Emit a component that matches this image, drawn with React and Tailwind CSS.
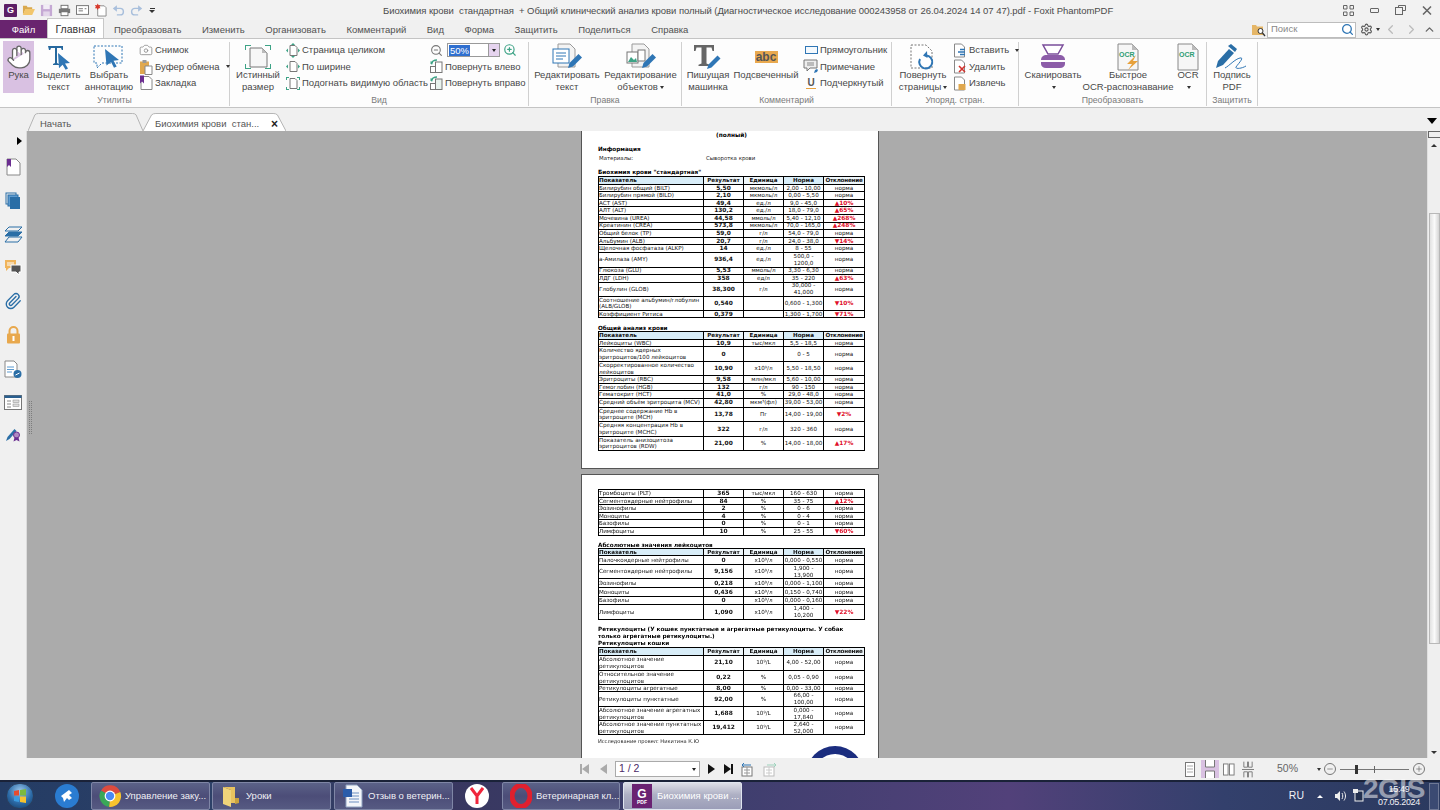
import { Hand, Camera, ZoomIn, ZoomOut, Search, Settings, ChevronLeft, ChevronRight, ChevronUp, Minus, Plus, Paperclip } from "lucide-react";

const S = "h-[7.6px]";
const D = "h-[14.6px]";

const bio = [
  ["Билирубин общий (BILT)", "5,50", "мкмоль/л", "2,00 - 10,00", "норма", S],
  ["Билирубин прямой (BILD)", "2,10", "мкмоль/л", "0,00 - 5,50", "норма", S],
  ["АСТ (AST)", "49,4", "ед./л", "9,0 - 45,0", "▲10%", S],
  ["АЛТ (ALT)", "130,2", "ед./л", "18,0 - 79,0", "▲65%", S],
  ["Мочевина (UREA)", "44,58", "ммоль/л", "5,40 - 12,10", "▲268%", S],
  ["Креатинин (CREA)", "573,8", "мкмоль/л", "70,0 - 165,0", "▲248%", S],
  ["Общий белок (TP)", "59,0", "г/л", "54,0 - 79,0", "норма", S],
  ["Альбумин (ALB)", "20,7", "г/л", "24,0 - 38,0", "▼14%", S],
  ["Щелочная фосфатаза (ALKP)", "14", "ед./л", "8 - 55", "норма", S],
  ["a-Амилаза (AMY)", "936,4", "ед./л", "500,0 - 1200,0", "норма", D],
  ["Глюкоза (GLU)", "5,53", "ммоль/л", "3,30 - 6,30", "норма", S],
  ["ЛДГ (LDH)", "358", "ед/л", "35 - 220", "▲63%", S],
  ["Глобулин (GLOB)", "38,300", "г/л", "30,000 - 41,000", "норма", "h-[13.8px]"],
  ["Соотношение альбумин/глобулин (ALB/GLOB)", "0,540", "", "0,600 - 1,300", "▼10%", D],
  ["Коэффициент Ритиса", "0,379", "", "1,300 - 1,700", "▼71%", "h-[7px]"],
];

const blood = [
  ["Лейкоциты (WBC)", "10,9", "тыс/мкл", "5,5 - 18,5", "норма", S],
  ["Количество ядерных эритроцитов/100 лейкоцитов", "0", "", "0 - 5", "норма", D],
  ["Скорректированное количество лейкоцитов", "10,90", "x10⁹/л", "5,50 - 18,50", "норма", D],
  ["Эритроциты (RBC)", "9,58", "млн/мкл", "5,60 - 10,00", "норма", "h-[7.3px]"],
  ["Гемоглобин (HGB)", "132", "г/л", "90 - 150", "норма", "h-[7.3px]"],
  ["Гематокрит (HCT)", "41,0", "%", "29,0 - 48,0", "норма", "h-[7.6px]"],
  ["Средний объём эритроцита (MCV)", "42,80", "мкм³(фл)", "39,00 - 53,00", "норма", "h-[9px]"],
  ["Среднее содержание Hb в эритроците (MCH)", "13,78", "Пг", "14,00 - 19,00", "▼2%", D],
  ["Средняя концентрация Hb в эритроците (MCHC)", "322", "г/л", "320 - 360", "норма", D],
  ["Показатель анизоцитоза эритроцитов (RDW)", "21,00", "%", "14,00 - 18,00", "▲17%", "h-[14px]"],
];

const blood2 = [
  ["Тромбоциты (PLT)", "365", "тыс/мкл", "160 - 630", "норма", S],
  ["Сегментоядерные нейтрофилы", "84", "%", "35 - 75", "▲12%", S],
  ["Эозинофилы", "2", "%", "0 - 6", "норма", S],
  ["Моноциты", "4", "%", "0 - 4", "норма", S],
  ["Базофилы", "0", "%", "0 - 1", "норма", S],
  ["Лимфоциты", "10", "%", "25 - 55", "▼60%", S],
];

const absolute = [
  ["Палочкоядерные нейтрофилы", "0", "x10⁹/л", "0,000 - 0,550", "норма", "h-[8.7px]"],
  ["Сегментоядерные нейтрофилы", "9,156", "x10⁹/л", "1,900 - 13,900", "норма", D],
  ["Эозинофилы", "0,218", "x10⁹/л", "0,000 - 1,100", "норма", "h-[8.7px]"],
  ["Моноциты", "0,436", "x10⁹/л", "0,150 - 0,740", "норма", "h-[8.7px]"],
  ["Базофилы", "0", "x10⁹/л", "0,000 - 0,160", "норма", "h-[8.3px]"],
  ["Лимфоциты", "1,090", "x10⁹/л", "1,400 - 10,200", "▼22%", D],
];

const retic = [
  ["Абсолютное значение ретикулоцитов", "21,10", "10⁹/L", "4,00 - 52,00", "норма", "h-[15px]"],
  ["Относительное значение ретикулоцитов", "0,22", "%", "0,05 - 0,90", "норма", "h-[14.4px]"],
  ["Ретикулоциты агрегатные", "8,00", "%", "0,00 - 33,00", "норма", "h-[7.3px]"],
  ["Ретикулоциты пунктатные", "92,00", "%", "66,00 - 100,00", "норма", D],
  ["Абсолютное значение агрегатных ретикулоцитов", "1,688", "10⁹/L", "0,000 - 17,840", "норма", "h-[14.3px]"],
  ["Абсолютное значение пунктатных ретикулоцитов", "19,412", "10⁹/L", "2,640 - 52,000", "норма", "h-[14px]"],
];

const DocTable = ({ rows, head = true }) => (
  <div className="w-[267px] border-t border-l border-black text-[5.6px] leading-[6.8px] text-[#111]">
    {head && (
      <div className="flex h-[7.6px] border-b border-black font-bold">
        <div className="w-[105px] shrink-0 border-r border-black bg-[#d8edf8]">Показатель</div>
        <div className="w-[40px] shrink-0 border-r border-black bg-[#eef6fa] text-center">Результат</div>
        <div className="w-[40px] shrink-0 border-r border-black bg-[#eef6fa] text-center">Единица</div>
        <div className="w-[40px] shrink-0 border-r border-black bg-[#d8edf8] text-center">Норма</div>
        <div className="w-[41px] shrink-0 border-r border-black bg-[#eef6fa] text-center whitespace-nowrap tracking-[-0.2px]">Отклонение</div>
      </div>
    )}
    {rows.map((r) => (
      <div key={r[0]} className={"flex border-b border-black overflow-hidden " + r[5]}>
        <div className="w-[105px] shrink-0 border-r border-black flex items-center">{r[0]}</div>
        <div className="w-[40px] shrink-0 border-r border-black flex items-center justify-center font-bold text-[5.9px]">{r[1]}</div>
        <div className="w-[40px] shrink-0 border-r border-black flex items-center justify-center">{r[2]}</div>
        <div className="w-[40px] shrink-0 border-r border-black flex items-center justify-center text-center">{r[3]}</div>
        <div className={"w-[41px] shrink-0 border-r border-black flex items-center justify-center " + (r[4] === "норма" ? "" : "font-bold text-[#e0102a] text-[5.9px]")}>{r[4]}</div>
      </div>
    ))}
  </div>
);

const DocTitle = ({ children }) => <div className="text-[5.7px] leading-[7px] font-bold text-black">{children}</div>;

// ---------- ribbon icons ----------
const TSelect = () => (
  <svg width="26" height="26" viewBox="0 0 26 26">
    <path d="M2 2h15v4h-1.200l-.8-2h-4v15l2 1v1H7v-1l2-1V4H5l-.8 2H3z" fill="#26689e" />
    <path d="M12 9l12 10-5 .6 3 5-2.400 1.200-3-5-3.600 3.400z" fill="#2f76b5" />
  </svg>
);
const AnnotSelect = () => (
  <svg width="34" height="26" viewBox="0 0 34 26">
    <path d="M2 2h28v17H10l-5 5v-5H2z" fill="none" stroke="#2f76b5" strokeDasharray="2 1.500" />
    <path d="M13 5l14 11-5.500.8 3.200 5.600-2.700 1.300-3-5.700-4.500 3.400z" fill="#2f76b5" />
  </svg>
);
const Clipboard = () => (
  <svg width="14" height="16" viewBox="0 0 14 16">
    <rect x="1" y="2.500" width="9" height="12.500" fill="#e0a84e" />
    <rect x="3.500" y="1" width="4" height="3" fill="#999" />
    <path d="M6 7h7v8.500H6z" fill="#fff" stroke="#888" />
  </svg>
);
const BookmarkDoc = () => (
  <svg width="14" height="16" viewBox="0 0 14 16">
    <path d="M2 1.500h8l3 3v10H2z" fill="#fff" stroke="#888" />
    <path d="M1 .5h4v8L3 6.500 1 8.500z" fill="#6b2e91" />
  </svg>
);
const FitIcon = ({ kind }) => (
  <svg width="16" height="15" viewBox="0 0 16 15">
    <path d="M5 2.500h5l2 2v8H5z" fill="#fff" stroke="#777" />
    {kind === "page" && <path d="M8 0l2 2H6zM8 15l-2-2h4zM1 7.500l2-2v4zM15 7.500l-2-2v4z" fill="#3da386" />}
    {kind === "width" && <path d="M1 7.500l2-2v4zM15 7.500l-2-2v4z" fill="#3da386" />}
    {kind === "visible" && <path d="M1 1h3v1H2v2H1zM15 1v3h-1V2h-2V1zM1 14v-3h1v2h2v1zM15 14h-3v-1h2v-2h1z" fill="#3da386" />}
  </svg>
);
const ActualSize = () => (
  <svg width="34" height="26" viewBox="0 0 34 26">
    <path d="M9 4h12l5 5v14H9z" fill="#f7f7f7" stroke="#777" />
    <path d="M21 4v5h5z" fill="#bbb" />
    <path d="M4 1h6v1H5v4H4zM30 1v5h-1V2h-5V1zM4 25v-5h1v4h5v1zM30 25h-6v-1h5v-4h1z" fill="#3da386" />
  </svg>
);
const RotateIcon = ({ right }) => (
  <svg width="15" height="15" viewBox="0 0 15 15">
    <rect x="1.500" y="7.500" width="7" height="6" fill="#fff" stroke="#777" />
    <rect x="6.500" y="3" width="6.500" height="10.500" fill={right ? "#e9f3ee" : "#fff"} stroke="#777" />
    <path d="M2 5c1-3 3-4 6-4" fill="none" stroke="#3da386" strokeWidth="1.500" />
    <path d="M1 2.500l3 .5-1 3z" fill="#3da386" />
  </svg>
);
const EditText = () => (
  <svg width="34" height="28" viewBox="0 0 34 28">
    <path d="M8 1h12l5 5v18H8z" fill="#f3f3f3" stroke="#999" />
    <rect x="3" y="6" width="16" height="14" fill="#fff" stroke="#2f76b5" />
    <path d="M6 10h10M6 13h10M6 16h7" stroke="#2f76b5" />
    <path d="M18 25l1.500-5 9-9 3.500 3.500-9 9z" fill="#2f76b5" />
  </svg>
);
const EditObjects = () => (
  <svg width="34" height="28" viewBox="0 0 34 28">
    <path d="M8 1h12l5 5v18H8z" fill="#f3f3f3" stroke="#999" />
    <rect x="3" y="9" width="11" height="11" fill="#fff" stroke="#777" />
    <path d="M4 19l3-5 3 3 2-2 1 4z" fill="#3da386" />
    <rect x="14" y="7" width="7" height="11" fill="#fff" stroke="#777" />
    <path d="M18 25l1.500-5 9-9 3.500 3.500-9 9z" fill="#2f76b5" />
  </svg>
);
const Typewriter = () => (
  <svg width="34" height="28" viewBox="0 0 34 28">
    <path d="M3 2h20v6h-1.500l-1-3.500h-5v16l3 1.200V23H7.500v-1.300l3-1.200v-16h-5L4.500 8H3z" fill="#666" />
    <path d="M16 26l1.500-4.500 9-9 3 3-9 9z" fill="#2f76b5" />
  </svg>
);
const NoteIcon = () => (
  <svg width="16" height="15" viewBox="0 0 16 15">
    <path d="M1 1h13v8H7l-3 3V9H1z" fill="#eee" stroke="#777" />
    <path d="M4 4h7M4 6h7" stroke="#888" />
    <path d="M11 14l1-3 2-1 1 1-1 2z" fill="#2f76b5" />
  </svg>
);
const RotatePages = () => (
  <svg width="30" height="28" viewBox="0 0 30 28">
    <path d="M3 2h15l6 6v17H3z" fill="#fff" stroke="#777" strokeDasharray="2 1.500" />
    <path d="M12 16a6.500 6.500 0 1 0 6-3.500" fill="none" stroke="#2f76b5" strokeWidth="2" />
    <path d="M19 8l-4 4.500 4.500 2.500z" fill="#2f76b5" />
  </svg>
);
const PageOp = ({ kind }) => (
  <svg width="14" height="15" viewBox="0 0 14 15">
    <path d="M1.500 1h7l3 3v10h-10z" fill="#fff" stroke="#888" />
    {kind === "in" && <path d="M5 9h7M7 6.500h5M7 11.500h5" stroke="#2f76b5" strokeWidth="1.300" />}
    {kind === "del" && <path d="M6 7l6 6M12 7l-6 6" stroke="#d2322d" strokeWidth="1.600" />}
    {kind === "out" && <rect x="5.500" y="8" width="7" height="6" fill="#e0a84e" />}
  </svg>
);
const Scanner = () => (
  <svg width="30" height="28" viewBox="0 0 30 28">
    <path d="M5 2h20l-5 9H10z" fill="#fff" stroke="#7a4d9a" strokeWidth="1.500" />
    <path d="M9 12h12c4 0 6 2 6 5H3c0-3 2-5 6-5z" fill="#8c5da8" />
    <path d="M3 19h24v2c0 2-2 4-5 4H8c-3 0-5-2-5-4z" fill="#8c5da8" />
  </svg>
);
const OcrDoc = ({ bolt }) => (
  <div className="relative h-[28px] w-[24px]">
    <svg width="24" height="28" viewBox="0 0 24 28" className="absolute inset-0">
      <path d="M2 1h14l6 6v20H2z" fill="#f6f6f6" stroke="#888" />
      <path d="M16 1v6h6z" fill="#bbb" />
      {bolt && <path d="M20 12l-9 9h5l-4 6 10-9h-5z" fill="#e7a13c" />}
    </svg>
    <span className="absolute left-[3px] top-[8px] text-[7px] leading-[8px] font-bold text-[#2f9d74]">OCR</span>
  </div>
);
const Signature = () => (
  <svg width="34" height="28" viewBox="0 0 34 28">
    <path d="M1 25l2-7 11-12 5 4L8 22z" fill="#2a6ea6" />
    <path d="M13 3l3-2 6 5-2 3z" fill="#2a6ea6" />
    <path d="M10 25c4-2 10-9 15-10 5-1-2 6-4 9-1 2 5 2 10-1" fill="none" stroke="#2f76b5" />
  </svg>
);

// ---------- ribbon parts ----------
const BigBtn = ({ className, icon, lines, caret, active }) => (
  <div className={"flex flex-col items-center shrink-0 h-[52px] " + className + (active ? " bg-[#d9c1e2]" : "")}>
    <div className="h-[28px] flex items-center justify-center pt-[3px]">{icon}</div>
    {lines.map((l, i) => (
      <div key={i} className="h-[12px] leading-[12px] whitespace-nowrap">
        {l}
        {caret && i === lines.length - 1 && <span className="inline-block ml-[2px] align-middle border-x-[2.5px] border-t-[3px] border-x-transparent border-t-[#333]" />}
      </div>
    ))}
  </div>
);

const SmallRow = ({ icon, label, caret, className = "" }) => (
  <div className={"flex items-center h-[16.5px] whitespace-nowrap " + className}>
    <div className="w-[16px] flex justify-center shrink-0">{icon}</div>
    <span className="ml-[1px]">{label}</span>
    {caret && <span className="ml-[6px] border-x-[2.5px] border-t-[3px] border-x-transparent border-t-[#333]" />}
  </div>
);

const Group = ({ className, label, children }) => (
  <div className={"flex flex-col shrink-0 border-r border-[#d0d0d0] h-[64px] " + className}>
    <div className="flex h-[51px] -mt-[1px]">{children}</div>
    <div className="mt-auto text-center text-[8.7px] leading-[12px] text-[#7a7a7a]">{label}</div>
  </div>
);

const sideIcons = [
  <svg key="a" width="16" height="18" viewBox="0 0 16 18"><path d="M2 1h9l4 4v12H2z" fill="#fff" stroke="#888" /><path d="M2 1h4v8L4 7 2 9z" fill="#6b2e91" /></svg>,
  <svg key="b" width="16" height="18" viewBox="0 0 16 18"><rect x="1" y="1" width="10" height="11" fill="none" stroke="#2a6ea6" /><rect x="3" y="3" width="10" height="11" fill="#5d9bd0" stroke="#2a6ea6" /><rect x="5" y="5" width="10" height="12" fill="#2a6ea6" /></svg>,
  <svg key="c" width="19" height="17" viewBox="0 0 19 17"><path d="M5 1h13l-4 4H1zM5 6h13l-4 4H1z" fill="none" stroke="#2a6ea6" /><path d="M5 6h13l-4 4H1z" fill="#2a6ea6" /><path d="M5 11h13l-4 5H1z" fill="none" stroke="#2a6ea6" /></svg>,
  <svg key="d" width="18" height="17" viewBox="0 0 18 17"><path d="M1 1h11v8H5L2 12V9H1z" fill="#f0b45a" /><path d="M3 4h7M3 6h7" stroke="#fff" /><path d="M7 6h10v7h-2v3l-3-3H7z" fill="#555" stroke="#fff" /></svg>,
  <Paperclip key="e" size={18} strokeWidth={1.8} color="#2a6ea6" />,
  <svg key="f" width="15" height="18" viewBox="0 0 15 18"><path d="M3.500 8V5a4 4 0 0 1 8 0v3" fill="none" stroke="#e8a84d" strokeWidth="2" /><rect x="1" y="7.500" width="13" height="10" rx="1" fill="#e8a84d" /><rect x="6.500" y="10" width="2" height="5" fill="#fff" /></svg>,
  <svg key="g" width="18" height="19" viewBox="0 0 18 19"><path d="M1 1h9l3 3v13H1z" fill="#fff" stroke="#888" /><path d="M3 7h7M3 9.500h7M3 12h5" stroke="#5d9bd0" /><circle cx="13.500" cy="14" r="4" fill="#2a6ea6" /><path d="M11.500 15l4-2" stroke="#fff" /></svg>,
  <svg key="h" width="18" height="15" viewBox="0 0 18 15"><rect x="0.500" y="0.500" width="17" height="14" fill="#fff" stroke="#777" /><rect x="0.500" y="0.500" width="17" height="2.500" fill="#2a5f8f" /><path d="M3 6h4M3 9h4M3 12h4" stroke="#888" /><rect x="9" y="5" width="6" height="2.500" fill="#ddd" stroke="#888" strokeWidth=".5" /><rect x="9" y="9" width="6" height="2.500" fill="#ddd" stroke="#888" strokeWidth=".5" /></svg>,
  <svg key="i" width="16" height="16" viewBox="0 0 16 16"><path d="M1 15l1.500-4 7-8 2 2-7 8z" fill="#2a6ea6" /><circle cx="11.500" cy="9" r="3" fill="#b08ac2" stroke="#6b2e91" /><path d="M9.500 11.500L8.500 15.500l3-1.500 3 1.500-1-4z" fill="#6b2e91" /></svg>,
];

const Tab = ({ active, className, label, close }) => (
  <div className={"relative flex items-center shrink-0 h-[18px] pt-[4px] " + className}>
    <svg className="absolute inset-0 h-full w-full" preserveAspectRatio="none" viewBox="0 0 100 19">
      <path d="M0 19 L6 2 Q7 .5 9 .5 L91 .5 Q93 .5 94 2 L100 19" fill={active ? "#ffffff" : "#f0f0f0"} stroke="#b4b4b4" vectorEffect="non-scaling-stroke" />
    </svg>
    <span className="relative pl-[12px] whitespace-pre">{label}</span>
    {close && <span className="absolute right-[8px] top-[4px] text-[12px] leading-[14px] font-bold text-[#222]">×</span>}
  </div>
);

const Seal = () => (
  <svg width="58" height="58" viewBox="0 0 58 58">
    <circle cx="29" cy="29" r="29" fill="#1b2d7f" />
    <circle cx="29" cy="29" r="21" fill="#fff" />
  </svg>
);

const TaskBtn = ({ className, icon, label, active }) => (
  <div className={"flex items-center gap-[3px] h-[28px] shrink-0 rounded-[2px] border px-[6px] whitespace-nowrap overflow-hidden " + (active ? "border-[#dfe4ee] bg-[linear-gradient(180deg,#dcdde6,#aeb0c4_45%,#9b9db8)] text-[#fff] " : "border-[#7f86a6] bg-[linear-gradient(180deg,#5b6288,#4c4d78_50%,#565a82)] text-[#f0f0f5] ") + className}>
    <div className="w-[24px] h-[24px] shrink-0 flex items-center justify-center">{icon}</div>
    <span>{label}</span>
  </div>
);

const ChromeIcon = () => (
  <svg width="24" height="24" viewBox="0 0 24 24">
    <path d="M12 12L3 6.500A10.800 10.800 0 0 1 22.300 8z" fill="#dd4b3e" />
    <path d="M12 12L22.300 8A10.800 10.800 0 0 1 11 22.800z" fill="#f7c32e" />
    <path d="M12 12L11 22.800A10.800 10.800 0 0 1 3 6.500z" fill="#3aa757" />
    <circle cx="12" cy="12" r="5.400" fill="#fff" />
    <circle cx="12" cy="12" r="4.200" fill="#4a8af4" />
  </svg>
);

const App = () => (
  <div className="h-[810px] w-[1440px] overflow-hidden flex flex-col bg-[#f0f0f0] text-[#444] text-[9.5px] font-['Liberation_Sans','DejaVu_Sans',sans-serif]">
    {/* title bar */}
    <div className="relative flex items-center h-[20px] shrink-0 bg-[#f2f2f2]">
      <div className="flex items-center gap-[5px] pl-[4px]">
        <div className="w-[13px] h-[13px] bg-[#5d1f66] rounded-[1px] flex items-center justify-center text-white text-[9px] font-bold leading-none">G</div>
        <svg width="13" height="12" viewBox="0 0 14 13"><path d="M1 2h4l1 1.500h5v2H4L1 12z" fill="#d9a94f" /><path d="M3.500 5.500H14L11 12H1z" fill="#f2c66c" /></svg>
        <svg width="13" height="13" viewBox="0 0 14 14"><rect x="1" y="1" width="12" height="12" fill="#c5a9d4" /><rect x="3.500" y="1" width="7" height="4.500" fill="#f2ecf6" /><rect x="3.500" y="8" width="7" height="5" fill="#e3d6ea" /></svg>
        <svg width="13" height="13" viewBox="0 0 15 14"><rect x="3.500" y="1" width="8" height="4" fill="#fff" stroke="#666" /><rect x="1" y="5" width="13" height="5" fill="#777" /><rect x="3.500" y="8.500" width="8" height="4.500" fill="#fff" stroke="#666" /></svg>
        <svg width="13" height="12" viewBox="0 0 15 13"><rect x=".5" y="1.500" width="14" height="10" fill="#fff" stroke="#666" /><path d="M3 5h5M3 7.500h5M10 5h2" stroke="#666" /></svg>
        <svg width="13" height="14" viewBox="0 0 14 15"><path d="M4 3h7l2 2v9H4z" fill="#fff" stroke="#888" /><path d="M4 .5l1 2 2-.5-1 2 1 1.500-2 0-1 2-1-2-2 0 1-1.500-1-2 2 .5z" fill="#d8392b" /></svg>
        <svg width="13" height="12" viewBox="0 0 16 14"><path d="M5 5h5a4 4 0 0 1 0 8H6" fill="none" stroke="#a8bfdc" strokeWidth="1.800" /><path d="M1 5l5-4v8z" fill="#a8bfdc" /></svg>
        <svg width="13" height="12" viewBox="0 0 16 14"><path d="M11 5H6a4 4 0 0 0 0 8h4" fill="none" stroke="#a8bfdc" strokeWidth="1.800" /><path d="M15 5l-5-4v8z" fill="#a8bfdc" /></svg>
        <div className="flex flex-col items-center gap-[1px] ml-[1px]">
          <div className="w-[5px] h-px bg-[#333]" />
          <div className="border-x-[3px] border-t-[3px] border-x-transparent border-t-[#333]" />
        </div>
      </div>
      <div className="absolute left-[383px] top-[4px] whitespace-pre text-[#4b4b4b] tracking-[-0.05px]">Биохимия крови  стандартная  + Общий клинический анализ крови полный (Диагностическое исследование 000243958 от 26.04.2024 14 07 47).pdf - Foxit PhantomPDF</div>
      <div className="ml-auto flex items-center gap-[16px] pr-[8px] text-[#666]">
        <svg width="11" height="11" viewBox="0 0 11 11"><path d="M.5.5h3.500v3.500H.5zM7 .5h3.500v3.500H7zM.5 7h3.500v3.500H.5zM7 7h3.500v3.500H7z" fill="none" stroke="#666" /></svg>
        <div className="w-[9px] h-[5px] rounded-[1px] border border-[#666]" />
        <svg width="11" height="10" viewBox="0 0 11 10"><path d="M3.500 2.500V.5h7v5H8" fill="none" stroke="#666" /><rect x=".5" y="2.500" width="7" height="7" fill="none" stroke="#666" /></svg>
        <svg width="10" height="9" viewBox="0 0 10 9"><path d="M1 .5l8 8M9 .5l-8 8" stroke="#666" strokeWidth="1.500" /></svg>
      </div>
    </div>

    {/* menu tabs */}
    <div className="flex items-end h-[18px] shrink-0 text-[#505050]">
      <div className="w-[47px] h-[18px] pt-[2px] bg-[#69246f] text-white flex items-center justify-center shrink-0">Файл</div>
      <div className="w-[57px] h-[20px] -mt-[2px] pt-[2px] bg-white border border-b-0 border-[#c8c8c8] text-[#333] text-[10.5px] flex items-center justify-center shrink-0 z-10">Главная</div>
      <div className="flex items-center h-[18px] pt-[3px] pl-[10px] gap-[20.5px]">
        <span>Преобразовать</span>
        <span>Изменить</span>
        <span>Организовать</span>
        <span>Комментарий</span>
        <span>Вид</span>
        <span>Форма</span>
        <span>Защитить</span>
        <span>Поделиться</span>
        <span>Справка</span>
      </div>
      <div className="ml-auto flex items-center h-[18px] pt-[1px] pr-[4px]">
        <svg width="15" height="14" viewBox="0 0 15 14"><path d="M1 2h4l1 1.500h6V12H1z" fill="#e5b667" /><circle cx="9.500" cy="8" r="2.500" fill="#fff" stroke="#333" /><path d="M11.500 10l2.500 3" stroke="#333" strokeWidth="1.300" /></svg>
        <div className="ml-[1px] w-[89px] h-[16px] bg-white border border-[#bdbdbd] flex items-center justify-between pl-[3px] pr-[1px] text-[#888]">
          Поиск
          <Search size={13} strokeWidth={2.4} color="#2f76b5" />
        </div>
        <Settings size={13} className="ml-[4px]" color="#555" />
        <div className="ml-[3px] border-x-[2.5px] border-t-[3px] border-x-transparent border-t-[#333]" />
        <ChevronLeft size={15} color="#bbb" className="ml-[3px]" />
        <ChevronRight size={15} color="#bbb" className="ml-[6px]" />
        <ChevronUp size={13} color="#666" strokeWidth={2.5} className="ml-[4px]" />
      </div>
    </div>

    {/* ribbon */}
    <div className="flex h-[70px] shrink-0 bg-[#fdfdfd] border-t border-b border-[#c4c4c4] pt-[3px] text-[#484848]">
      <Group className="w-[230px]" label="Утилиты">
        <BigBtn active className="ml-[3px] w-[31px]" icon={<Hand size={26} fill="#fff" color="#666" strokeWidth={1.2} />} lines={["Рука"]} />
        <BigBtn className="w-[49px]" icon={<TSelect />} lines={["Выделить", "текст"]} />
        <BigBtn className="w-[52px]" icon={<AnnotSelect />} lines={["Выбрать", "аннотацию"]} />
        <div className="pl-[3px] pt-[1px]">
          <SmallRow icon={<Camera size={14} color="#888" strokeWidth={1.4} />} label="Снимок" />
          <SmallRow icon={<Clipboard />} label="Буфер обмена" caret />
          <SmallRow icon={<BookmarkDoc />} label="Закладка" />
        </div>
      </Group>
      <Group className="w-[299px]" label="Вид">
        <BigBtn className="ml-[1px] w-[54px]" icon={<ActualSize />} lines={["Истинный", "размер"]} />
        <div className="pt-[1px] w-[143px] shrink-0">
          <SmallRow icon={<FitIcon kind="page" />} label="Страница целиком" />
          <SmallRow icon={<FitIcon kind="width" />} label="По ширине" />
          <SmallRow icon={<FitIcon kind="visible" />} label="Подогнать видимую область" />
        </div>
        <div className="pt-[1px]">
          <div className="flex items-center h-[16.5px]">
            <div className="w-[16px] flex justify-center"><ZoomOut size={13} color="#777" /></div>
            <div className="flex items-center ml-[3px] w-[53px] h-[14px] bg-white border border-[#9a9a9a]">
              <span className="bg-[#2f6fcf] text-white px-[1px] leading-[11px] ml-[1px]">50%</span>
              <div className="ml-auto w-[11px] h-full bg-[#e5d3ee] border-l border-[#9a9a9a] flex items-center justify-center">
                <div className="border-x-[2.5px] border-t-[3px] border-x-transparent border-t-[#222]" />
              </div>
            </div>
            <ZoomIn size={14} color="#3da386" className="ml-[3px]" />
          </div>
          <SmallRow icon={<RotateIcon />} label="Повернуть влево" />
          <SmallRow icon={<RotateIcon right />} label="Повернуть вправо" />
        </div>
      </Group>
      <Group className="w-[153px]" label="Правка">
        <BigBtn className="ml-[1px] w-[74px]" icon={<EditText />} lines={["Редактировать", "текст"]} />
        <BigBtn className="w-[73px]" icon={<EditObjects />} lines={["Редактирование", "объектов"]} caret />
      </Group>
      <Group className="w-[210px]" label="Комментарий">
        <BigBtn className="ml-[1px] w-[50px]" icon={<Typewriter />} lines={["Пишущая", "машинка"]} />
        <BigBtn className="w-[66px]" icon={<div className="w-[23px] h-[12px] bg-[#e9a94f] flex items-center justify-center text-[12px] font-bold text-[#555] leading-none">abc</div>} lines={["Подсвеченный"]} />
        <div className="pl-[4px] pt-[1px]">
          <SmallRow icon={<div className="w-[13px] h-[8px] border border-[#2f76b5] bg-[#f4f9fd]" />} label="Прямоугольник" />
          <SmallRow icon={<NoteIcon />} label="Примечание" />
          <SmallRow icon={<div className="text-[10px] leading-[10px] font-bold text-[#555] border-b border-[#e7a13c] px-[1px]">U</div>} label="Подчеркнутый" />
        </div>
      </Group>
      <Group className="w-[127px]" label="Упоряд. стран.">
        <BigBtn className="ml-[2px] w-[58px]" icon={<RotatePages />} lines={["Повернуть", "страницы"]} caret />
        <div className="pt-[1px]">
          <SmallRow icon={<PageOp kind="in" />} label="Вставить" caret />
          <SmallRow icon={<PageOp kind="del" />} label="Удалить" />
          <SmallRow icon={<PageOp kind="out" />} label="Извлечь" />
        </div>
      </Group>
      <Group className="w-[188px]" label="Преобразовать">
        <BigBtn className="ml-[1px] w-[66px]" icon={<Scanner />} lines={["Сканировать", ""]} caret />
        <BigBtn className="w-[84px]" icon={<OcrDoc bolt />} lines={["Быстрое", "OCR-распознавание"]} />
        <BigBtn className="w-[36px]" icon={<OcrDoc />} lines={["OCR", ""]} caret />
      </Group>
      <Group className="w-[51px]" label="Защитить">
        <BigBtn className="w-[50px]" icon={<Signature />} lines={["Подпись", "PDF"]} />
      </Group>
    </div>

    {/* document tabs */}
    <div className="relative flex items-end h-[23px] shrink-0 pl-[28px] text-[#555] bg-[#f0f0f0]">
      <Tab className="w-[115px]" label="Начать" />
      <Tab active className="w-[143px]" label="Биохимия крови  стан..." close />
      <div className="absolute right-[3px] top-[10px] border-x-[5px] border-t-[6px] border-x-transparent border-t-black" />
    </div>

    {/* workspace */}
    <div className="flex flex-1 min-h-0">
      <div className="w-[27px] shrink-0 bg-[#f0f0f0] border-r border-[#dcdcdc] flex flex-col items-center relative">
        <div className="absolute left-[17px] top-[6px] border-y-[4px] border-l-[5px] border-y-transparent border-l-black" />
        <div className="flex flex-col items-center gap-[16px] pt-[27px]">
          {sideIcons}
        </div>
      </div>
      <div className="relative flex-1 min-w-0 bg-[#ababab] overflow-hidden">
        <div className="absolute left-[2px] top-[270px] w-[3px] h-[33px] border-x border-dotted border-[#7d7d7d]" />
        <div className="ml-[554px] w-[298px] font-['DejaVu_Sans',sans-serif] blur-[0.2px]">
          <div className="h-[338px] bg-white border-x border-b border-[#555] pl-[16px] overflow-hidden">
            <div className="w-[267px] text-center text-[5.8px] leading-[7px] font-bold text-black pt-[1px]">(полный)</div>
            <div className="mt-[7px]"><DocTitle>Информация</DocTitle></div>
            <div className="flex mt-[2px] text-[5.4px] leading-[7px] text-[#222] pl-[1px]">
              <div className="w-[107px]">Материалы:</div>
              <div>Сыворотка крови</div>
            </div>
            <div className="mt-[7px]"><DocTitle>Биохимия крови "стандартная"</DocTitle></div>
            <DocTable rows={bio} />
            <div className="mt-[7px] -mb-[1px]"><DocTitle>Общий анализ крови</DocTitle></div>
            <DocTable rows={blood} />
          </div>
          <div className="mt-[5px] bg-white border-x border-t border-[#555] pl-[16px] pt-[14px] h-[300px]">
            <DocTable rows={blood2} head={false} />
            <div className="mt-[6px] -mb-[1px]"><DocTitle>Абсолютные значения лейкоцитов</DocTitle></div>
            <DocTable rows={absolute} />
            <div className="mt-[6.5px] w-[267px]"><DocTitle>Ретикулоциты (У кошек пунктатные и агрегатные ретикулоциты. У собак только агрегатные ретикулоциты.)</DocTitle></div>
            <DocTitle>Ретикулоциты кошки</DocTitle>
            <DocTable rows={retic} />
            <div className="mt-[3px] text-[5.1px] leading-[7px] text-[#222]">Исследование провел: Никитина К.Ю</div>
            <div className="ml-[208px] mt-[1px]"><Seal /></div>
          </div>
        </div>
      </div>
      {/* vertical scrollbar */}
      <div className="w-[13px] shrink-0 bg-[#efefef] border-l border-[#e0e0e0] flex flex-col items-center">
        <div className="w-[13px] h-[7px] border border-[#666] bg-[#eee]" />
        <div className="mt-[6px] border-x-[3px] border-b-[3px] border-x-transparent border-b-[#333]" />
        <div className="mt-[66px] w-[11px] h-[431px] bg-[linear-gradient(90deg,#e2e2e2,#fafafa_50%,#d5d5d5)] border border-[#b8b8b8]" />
        <div className="mt-auto mb-[4px] border-x-[3px] border-t-[3px] border-x-transparent border-t-[#333]" />
      </div>
    </div>

    {/* status bar */}
    <div className="relative flex items-center h-[22px] shrink-0 bg-[#f0f0f0] text-[#666]">
      <div className="flex items-center ml-[580px] text-[#999]">
        <div className="w-[2px] h-[10px] bg-[#aaa]" />
        <div className="border-y-[5px] border-r-[7px] border-y-transparent border-r-[#aaa]" />
        <div className="ml-[11px] border-y-[5px] border-r-[7px] border-y-transparent border-r-[#aaa]" />
        <div className="ml-[8px] w-[85px] h-[16px] bg-white border border-[#aaa] flex items-center justify-between px-[3px] text-[#4b2a66] text-[10.5px]">
          1 / 2
          <div className="border-x-[2.5px] border-t-[3px] border-x-transparent border-t-[#222]" />
        </div>
        <div className="ml-[8px] border-y-[5px] border-l-[7px] border-y-transparent border-l-[#111]" />
        <div className="ml-[9px] border-y-[5px] border-l-[7px] border-y-transparent border-l-[#111]" />
        <div className="w-[2px] h-[10px] bg-[#111]" />
        <svg width="14" height="15" viewBox="0 0 14 15" className="ml-[8px]"><rect x="1" y="5" width="10" height="9" fill="#fff" stroke="#777" /><path d="M2 3h8M3 1l-2 2 2 2" fill="none" stroke="#2f76b5" /><path d="M3 8h6M3 11h6M6 5v9" stroke="#999" /></svg>
        <svg width="14" height="15" viewBox="0 0 14 15" className="ml-[8px]"><rect x="1" y="5" width="10" height="9" fill="#fff" stroke="#bbb" /><path d="M4 3h8M11 1l2 2-2 2" fill="none" stroke="#9fd3bd" /><path d="M3 8h6M3 11h6M6 5v9" stroke="#ccc" /></svg>
      </div>
      <div className="ml-auto flex items-center pr-[15px]">
        <svg width="10" height="15" viewBox="0 0 10 15" className="mr-[6px]"><rect x=".5" y=".5" width="9" height="14" fill="#fff" stroke="#777" /><path d="M2 4h6M2 7h6M2 10h6" stroke="#aaa" /></svg>
        <div className="w-[18px] h-[18px] bg-[#d9c1e2] flex justify-center mr-[4px]"><svg width="10" height="18" viewBox="0 0 10 18"><path d="M.5 0v7h9V0M.5 18v-7h9v7" fill="#fff" stroke="#777" /></svg></div>
        <svg width="12" height="13" viewBox="0 0 13 13" className="mr-[7px]"><rect x=".5" y=".5" width="5" height="12" fill="#fff" stroke="#777" /><rect x="7" y=".5" width="5" height="12" fill="#fff" stroke="#777" /></svg>
        <svg width="12" height="17" viewBox="0 0 13 17" className="mr-[23px]"><path d="M2 0v6h4V0M7 0v6h4V0M0 8.500h13M2 17v-6h4v6M7 17v-6h4v6" fill="none" stroke="#777" /></svg>
        <span className="w-[24px] text-[10.5px] mr-[16px]">50%</span>
        <div className="border-x-[2.5px] border-t-[3px] border-x-transparent border-t-[#333] mr-[3px]" />
        <div className="w-[12px] h-[12px] rounded-full border border-[#777] flex items-center justify-center"><Minus size={8} color="#666" /></div>
        <div className="relative w-[69px] h-px bg-[#777] mx-[4px]">
          <div className="absolute left-[15px] -top-[4px] w-[3px] h-[9px] bg-[#333]" />
          <div className="absolute left-[34px] -top-[3px] w-px h-[7px] bg-[#666]" />
        </div>
        <div className="w-[12px] h-[12px] rounded-full border border-[#777] flex items-center justify-center"><Plus size={8} color="#666" /></div>
      </div>
    </div>

    {/* taskbar */}
    <div className="relative flex items-center h-[30px] shrink-0 border-t-2 border-[#1a2238] text-[#f2f2f6] bg-[linear-gradient(90deg,#243c64,#2f4168_18%,#38375f_30%,#3c3e6c_48%,#52417a_70%,#33406c_85%,#2b3a5f)]">
      <div className="w-[28px] h-[26px] ml-[6px] rounded-full bg-[radial-gradient(circle_at_50%_30%,#9cc7ec,#2c6ba8_55%,#13375f)] border border-[#2a3e5e] flex items-center justify-center shrink-0">
        <svg width="14" height="14" viewBox="0 0 14 14"><path d="M1 2l5-1v5.500H1z" fill="#e74c2e" /><path d="M7 1l6-1v6.500H7z" fill="#7cba3e" /><path d="M1 7.500h5V13l-5-1z" fill="#3a9be0" /><path d="M7 7.500h6V14l-6-1z" fill="#f7c32e" /></svg>
      </div>
      <div className="ml-[21px] w-[24px] h-[24px] rounded-full bg-[#2a7cd1] flex items-center justify-center shrink-0">
        <svg width="16" height="16" viewBox="0 0 16 16"><path d="M2 8l8-6 3 3-3 2 3 3-3 2-2-2-3 4-1-4z" fill="#fff" /></svg>
      </div>
      <TaskBtn className="ml-[12px] w-[119px]" icon={<ChromeIcon />} label="Управление заку..." />
      <TaskBtn className="ml-[2px] w-[119px]" icon={<svg width="20" height="24" viewBox="0 0 20 24"><path d="M2 3l8 3v17l-8-3z" fill="#f0d37a" /><path d="M2 3l12 0v16h-4V6z" fill="#e8c25f" /><path d="M14 14h4v5l-4 1z" fill="#c9a23f" /></svg>} label="Уроки" />
      <TaskBtn className="ml-[3px] w-[119px]" icon={<svg width="22" height="24" viewBox="0 0 22 24"><path d="M4 1h11l5 5v17H4z" fill="#f4f6fa" stroke="#8fa2c0" /><path d="M7 9h10M7 12h10M7 15h10M7 18h10" stroke="#6c8fc0" /><rect x="1" y="5" width="9" height="8" fill="#2b5caa" /></svg>} label="Отзыв о ветерин..." />
      <div className="ml-[12px] w-[24px] h-[24px] rounded-full bg-white flex items-center justify-center shrink-0">
        <svg width="14" height="18" viewBox="0 0 14 18"><path d="M1 1l6 8 6-8M7 9v8" fill="none" stroke="#f0263c" strokeWidth="3" /></svg>
      </div>
      <TaskBtn className="ml-[13px] w-[118px]" icon={<svg width="22" height="24" viewBox="0 0 22 24"><ellipse cx="11" cy="12" rx="9" ry="10.500" fill="none" stroke="#e0202e" strokeWidth="5" /></svg>} label="Ветеринарная кл..." />
      <TaskBtn active className="ml-[3px] w-[119px]" icon={
        <div className="w-[20px] h-[24px] bg-[#6a2272] flex flex-col items-center justify-center text-white font-bold leading-none">
          <span className="text-[12px]">G</span>
          <span className="text-[5px]">PDF</span>
        </div>
      } label="Биохимия крови ..." />
      <div className="ml-auto flex items-center">
        <span className="mr-[13px] text-[10.5px]">RU</span>
        <div className="mr-[11px] border-x-[3px] border-b-[3px] border-x-transparent border-b-white" />
        <svg width="12" height="14" viewBox="0 0 12 14" className="mr-[7px]"><path d="M1 5h2l3-3v10L3 9H1z" fill="#eee" /><path d="M8 4c1 2 1 4 0 6M10 2.500c2 3 2 6 0 9" fill="none" stroke="#eee" /></svg>
        <svg width="12" height="14" viewBox="0 0 12 14" className="mr-[13px]"><rect x="2" y="2" width="8" height="10" fill="#23304f" stroke="#eee" /><rect x="0" y="0" width="5" height="4" fill="#eee" /></svg>
        <div className="flex flex-col items-center text-[9px] leading-[13px] tracking-[-0.3px] w-[42px] whitespace-nowrap mr-[9px]">
          <span>15:49</span>
          <span>07.05.2024</span>
        </div>
      </div>
      <div className="w-[10px] h-[27px] shrink-0 mr-[1px] border border-[#6e7895] bg-[#3b4a72]" />
      <div className="absolute left-[1363px] -top-[11px] text-[28px] leading-[36px] font-bold tracking-[-0.5px] text-white/50 pointer-events-none">2GIS</div>
    </div>
  </div>
);

export default App;
